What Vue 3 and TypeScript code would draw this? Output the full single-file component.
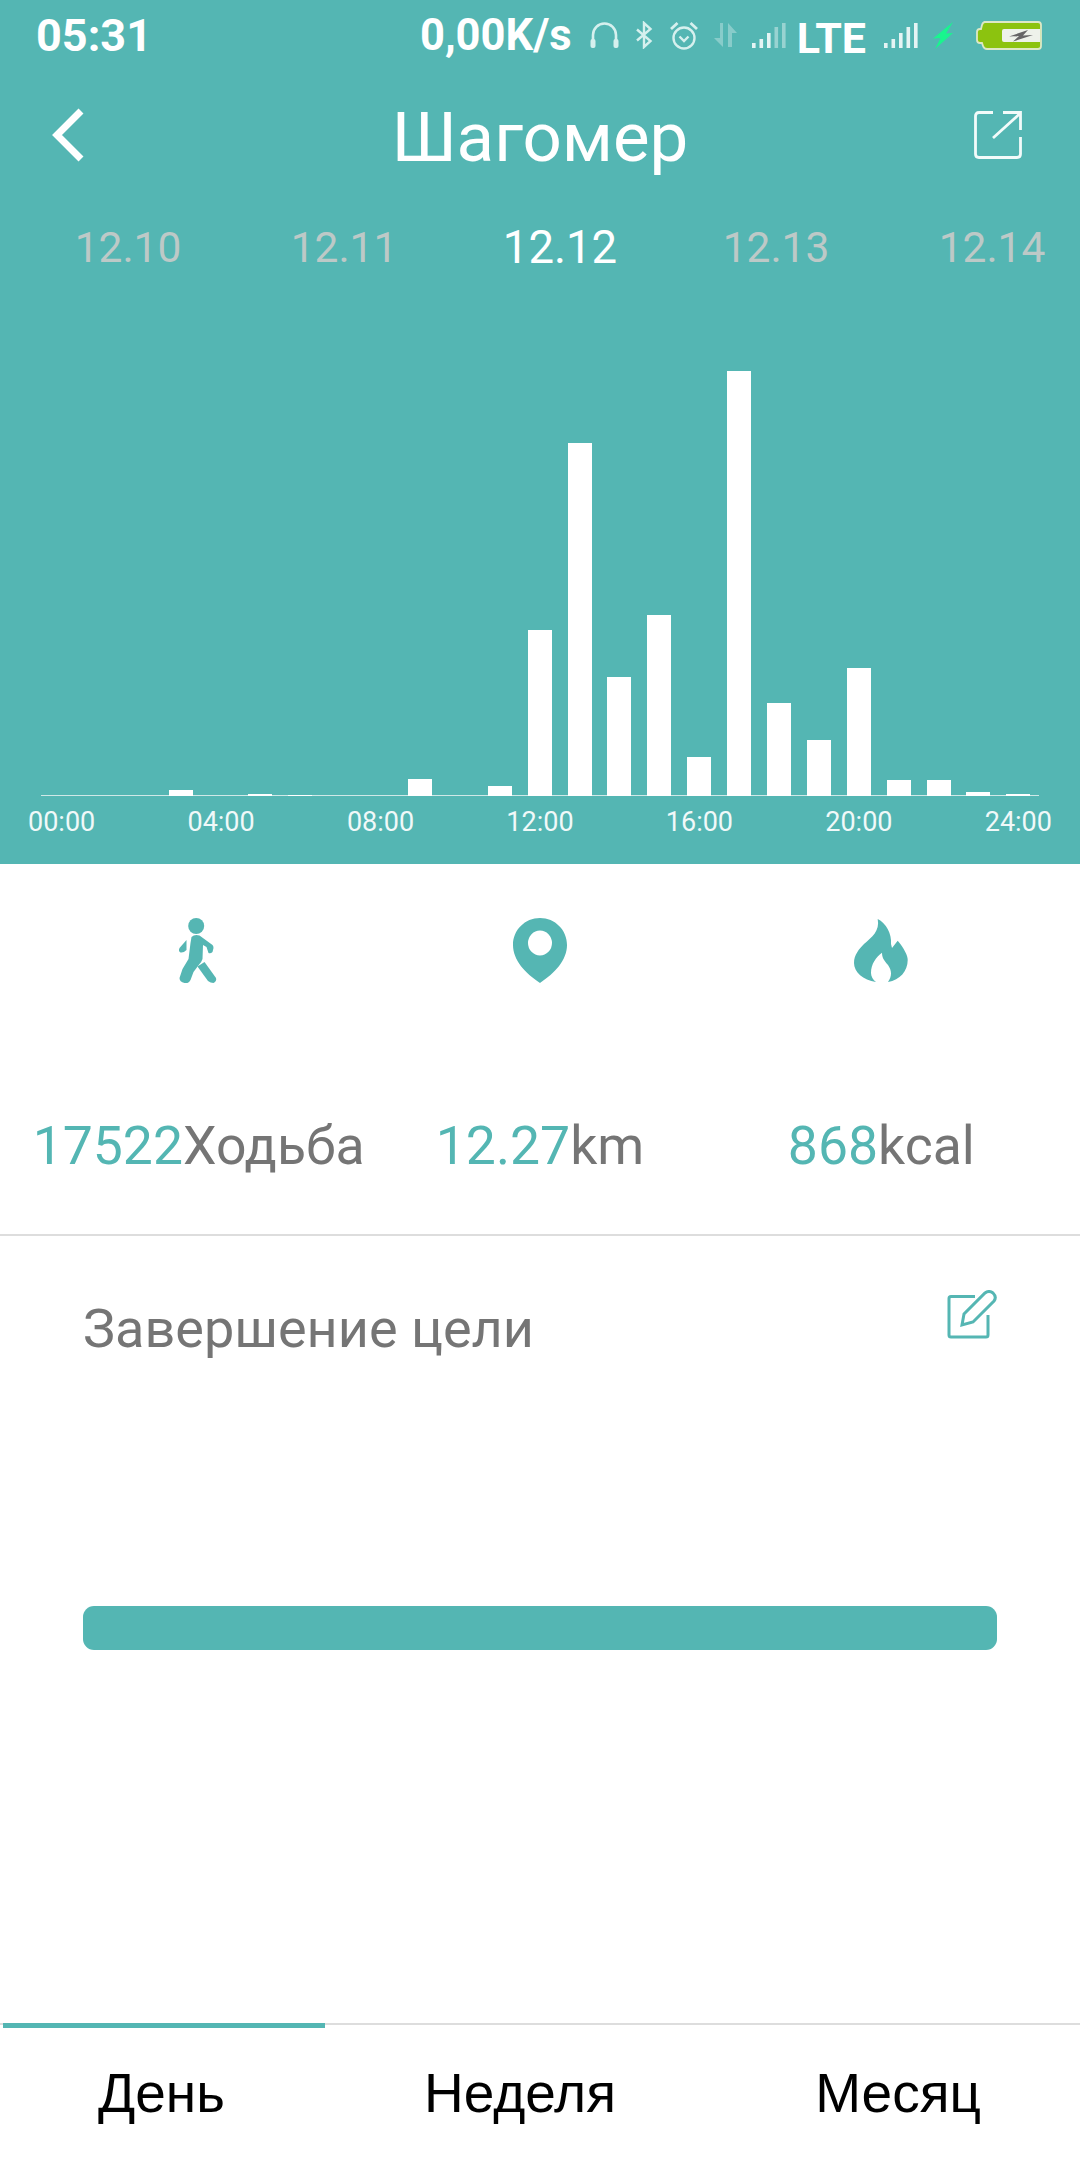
<script setup lang="ts">
const dates = [
  { label: '12.10', active: false },
  { label: '12.11', active: false },
  { label: '12.12', active: true },
  { label: '12.13', active: false },
  { label: '12.14', active: false },
]
const bars: number[] = [0, 0, 0, 6, 0, 2.5, 1.5, 0, 0, 17, 0, 10, 166, 353, 119, 181, 39, 425, 93, 56, 128, 16, 16, 4, 2.5]
const hours = ['00:00', '04:00', '08:00', '12:00', '16:00', '20:00', '24:00']
const tabs = ['День', 'Неделя', 'Месяц']
const signal = [
  { x: 0, h: 5 },
  { x: 7.5, h: 9 },
  { x: 15, h: 15 },
  { x: 22.5, h: 21 },
  { x: 30, h: 25 },
]
</script>

<template>
  <div class="screen">
    <section class="hero">
      <div class="status">
        <span class="time">05:31</span>
        <div class="status-right">
          <span class="speed">0,00K/s</span>
          <svg class="ico" width="29" height="26" viewBox="0 0 29 26" fill="none">
            <path d="M3 21V13a11.5 11.5 0 0 1 23 0V21" stroke="#d6f0ee" stroke-width="2.6" />
            <rect x="0.5" y="17" width="5" height="9" rx="2" fill="#d6f0ee" />
            <rect x="23.500" y="17" width="5" height="9" rx="2" fill="#d6f0ee" />
          </svg>
          <svg class="ico" width="20" height="28" viewBox="0 0 20 28" fill="none">
            <path d="M3 8.500 16.500 20 10 26V2l6.500 6L3 19.500" stroke="#d6f0ee" stroke-width="2.4" />
          </svg>
          <svg class="ico" width="30" height="29" viewBox="0 0 30 29" fill="none" stroke="#d6f0ee">
            <circle cx="15" cy="17" r="10.500" stroke-width="2.4" />
            <path d="M10.500 15.500 15 20l4.500-4.500" stroke-width="2.4" />
            <path d="M2 8 8.500 2M21.500 2 28 8" stroke-width="2.8" />
          </svg>
          <svg class="ico" width="23" height="24" viewBox="0 0 23 24" fill="#fff" opacity="0.3">
            <path d="M6 0h3v24L0 15h6Z" />
            <path d="M14 24V0l9 10h-5v14Z" />
          </svg>
          <svg class="ico" width="34" height="25" viewBox="0 0 34 25" fill="#fff">
            <rect v-for="(s, i) in signal" :key="s.x" :x="s.x" :y="25 - s.h" width="3.600" :height="s.h" :opacity="i < 3 ? 0.85 : 0.4" />
          </svg>
          <span class="lte">LTE</span>
          <svg class="ico" width="34" height="25" viewBox="0 0 34 25" fill="#fff">
            <rect v-for="s in signal" :key="s.x" :x="s.x" :y="25 - s.h" width="3.600" :height="s.h" opacity="0.85" />
          </svg>
          <svg class="ico" width="20" height="27" viewBox="0 0 20 27" fill="#19f58e">
            <path d="M20 0 0 16.500l7.500-.5L2 27 20 11l-7 .5Z" />
          </svg>
          <svg class="ico battery" width="66" height="29" viewBox="0 0 66 29">
            <path d="M8 1H62Q65 1 65 4V25Q65 28 62 28H11Q8 28 7 25L6 22H4Q1 22 1 19V11Q1 8 4 8H5L6 4Q7 1 9 1Z" fill="#8cc30f" stroke="#dde8c6" stroke-width="1.800" />
            <path d="M28 8H64V21H28Q26 21 26 19V10Q26 8 28 8Z" fill="#eef2ea" />
            <path d="M52 9 33 15.500l10-.5-6 5.500L57 14l-10 .5Z" fill="#666" />
          </svg>
        </div>
      </div>

      <div class="nav">
        <svg class="back" width="36" height="56" viewBox="0 0 36 56" fill="none">
          <path d="M30 4 6 28l24 24" stroke="#fff" stroke-width="7" />
        </svg>
        <h1 class="title">Шагомер</h1>
        <svg class="share" width="48" height="48" viewBox="0 0 48 48" fill="none" stroke="#f2fbfa" stroke-width="2.800">
          <path d="M19 1.500H5Q1.500 1.500 1.500 5V43Q1.500 46.500 5 46.500H43Q46.500 46.500 46.500 43V26" />
          <path d="M19 27 46 2.500M29 1.500H46.500V19" />
        </svg>
      </div>

      <div class="dates">
        <span v-for="d in dates" :key="d.label" class="date" :class="{ active: d.active }">{{ d.label }}</span>
      </div>

      <div class="chart">
        <div v-for="(h, i) in bars" :key="i" class="bar" :style="{ height: h + 'px' }"></div>
      </div>
      <div class="hours">
        <span v-for="h in hours" :key="h">{{ h }}</span>
      </div>
    </section>

    <section class="stats">
      <div class="stat">
        <div class="stat-icon">
          <svg class="walker" width="39" height="65" viewBox="9 8 38 65" fill="#55b6b3">
            <circle cx="26.700" cy="16" r="8" />
            <path d="M22 27Q25 24 30 25.500L43 35Q44 36 44 38L43 42Q41 44 39 43L37 37 33.500 35 33 49Q32 52 30 54L24 62 21 70Q19 74 15 73 10 72 10 68L13 59 19 49 21 33Z" />
            <path d="M17 30 10 38Q8.500 41 11 42.500 14 43 17 40Z" />
            <path d="M28 56.500 35 52 46.500 68Q47.500 71 44 73 41 73 38.500 71Z" />
          </svg>
        </div>
        <div class="value"><b>17522</b>Ходьба</div>
      </div>
      <div class="stat">
        <div class="stat-icon">
          <svg width="54" height="65" viewBox="0 0 54 65" fill="#55b6b3">
            <path fill-rule="evenodd" d="M27 0C42 0 54 12 54 27 54 42 42 55 27 65 12 55 0 42 0 27 0 12 12 0 27 0ZM27 12.500A12 12.500 0 1 0 27 37.500 12 12.500 0 1 0 27 12.500Z" />
          </svg>
        </div>
        <div class="value"><b>12.27</b>km</div>
      </div>
      <div class="stat">
        <div class="stat-icon">
          <svg width="54" height="63" viewBox="8 9 54 63" fill="#55b6b3">
            <path d="M31.700 9C40 13 46 24 45 34L46 38 51.700 30.700C58 38 62 46 61.700 50 61.700 61 54 70 42 72 46 66 46 61 42 55 37.500 50 36 47 36 42.700 30 47 25 54 25 63 25 66 27 70 30 72 17 70 8 62 8 53 8 45 13 39 18 34 26 27 34 21 31.700 9Z" />
          </svg>
        </div>
        <div class="value"><b>868</b>kcal</div>
      </div>
    </section>

    <section class="goal">
      <div class="goal-head">
        <span class="goal-title">Завершение цели</span>
        <svg width="51" height="50" viewBox="27 20 51 50" fill="none" stroke="#55b6b3" stroke-width="3">
          <path d="M55 26.500H31Q29 26.500 29 28.500V65Q29 67 31 67H66Q68 67 68 65V45" />
          <path d="M42 55 44 44 65 23Q69 20 73 23 77 27 74 31L53 52Z" />
        </svg>
      </div>
      <div class="progress"></div>
    </section>

    <nav class="tabs">
      <div class="tab-active"></div>
      <span v-for="t in tabs" :key="t" class="tab">{{ t }}</span>
    </nav>
  </div>
</template>

<style scoped>
.screen {
  width: 1080px;
  height: 2160px;
  display: flex;
  flex-direction: column;
  background: #fff;
  overflow: hidden;
  font-family: Roboto, "Noto Sans", sans-serif;
}
.hero {
  height: 864px;
  flex: none;
  background: #54b6b3;
  display: flex;
  flex-direction: column;
  color: #fff;
}
.status {
  height: 70px;
  flex: none;
  display: flex;
  align-items: center;
  padding: 0 38px 0 36px;
  font-weight: 700;
}
.time {
  font-size: 45px;
}
.status-right {
  margin-left: auto;
  display: flex;
  align-items: center;
  gap: 15px;
}
.speed {
  font-size: 43.500px;
  font-weight: 700;
  margin-right: 3px;
}
.ico {
  display: block;
  flex: none;
}
.lte {
  font-size: 43px;
  font-weight: 700;
  margin: 6px 3px 0 -4px;
  line-height: 50px;
}
.battery {
  margin-left: 8px;
}
.nav {
  height: 130px;
  flex: none;
  display: grid;
  grid-template-columns: 1fr auto 1fr;
  align-items: center;
  padding: 0 54px;
}
.back {
  margin-left: -3px;
}
.title {
  margin: 0;
  padding-top: 5px;
  font-size: 69px;
  font-weight: 400;
  line-height: 90px;
}
.share {
  justify-self: end;
  margin-right: 4px;
}
.dates {
  height: 94px;
  flex: none;
  display: grid;
  grid-template-columns: repeat(5, 216px);
  align-items: center;
  padding-left: 20px;
}
.date {
  text-align: center;
  font-size: 42.500px;
  color: #bdc9c7;
}
.date.active {
  font-size: 45.500px;
  color: #fff;
}
.chart {
  height: 502px;
  flex: none;
  margin-left: 41px;
  width: 998px;
  padding-left: 8px;
  box-sizing: border-box;
  display: flex;
  align-items: flex-end;
  gap: 15.900px;
  background: linear-gradient(#cfe8e7, #cfe8e7) bottom / 100% 1px no-repeat;
}
.bar {
  width: 24px;
  flex: none;
  background: #fff;
}
.hours {
  display: flex;
  justify-content: space-between;
  padding: 0 28px;
  font-size: 27px;
  line-height: 52px;
  color: #f0f9f9;
}
.stats {
  height: 370px;
  flex: none;
  display: grid;
  grid-template-columns: repeat(3, 1fr);
  padding: 0 28px;
  border-bottom: 2px solid #dddddd;
}
.stat {
  display: flex;
  flex-direction: column;
  align-items: center;
  padding-top: 54px;
}
.stat-icon {
  height: 65px;
  display: flex;
  align-items: center;
  justify-content: center;
  margin-bottom: 133px;
}
.stat-icon svg {
  display: block;
}
.stat-icon .walker {
  margin-left: -3px;
}
.value {
  font-size: 53.500px;
  line-height: 60px;
  color: #757575;
  white-space: nowrap;
}
.value b {
  font-weight: 400;
  color: #54b6b3;
}
.goal {
  flex: 1;
  padding: 54px 83px 0;
  display: flex;
  flex-direction: column;
}
.goal-head {
  display: flex;
  justify-content: space-between;
  align-items: flex-start;
  height: 72px;
}
.goal-head svg {
  display: block;
  margin: 0 -1px 0 0;
}
.goal-title {
  margin-top: 9px;
  font-size: 54px;
  line-height: 60px;
  color: #757575;
}
.progress {
  margin-top: 244px;
  height: 44px;
  border-radius: 11px;
  background: #54b6b3;
}
.tabs {
  position: relative;
  height: 137px;
  flex: none;
  box-sizing: border-box;
  border-top: 2px solid #dddddd;
  display: flex;
  justify-content: space-between;
  padding: 38px 99px 0 98px;
  font-family: "Liberation Sans", Arial, sans-serif;
}
.tab-active {
  position: absolute;
  left: 3px;
  top: -2px;
  width: 322px;
  height: 5px;
  background: #54b6b3;
}
.tab {
  font-size: 55px;
  line-height: 60px;
  color: #000;
}
</style>
